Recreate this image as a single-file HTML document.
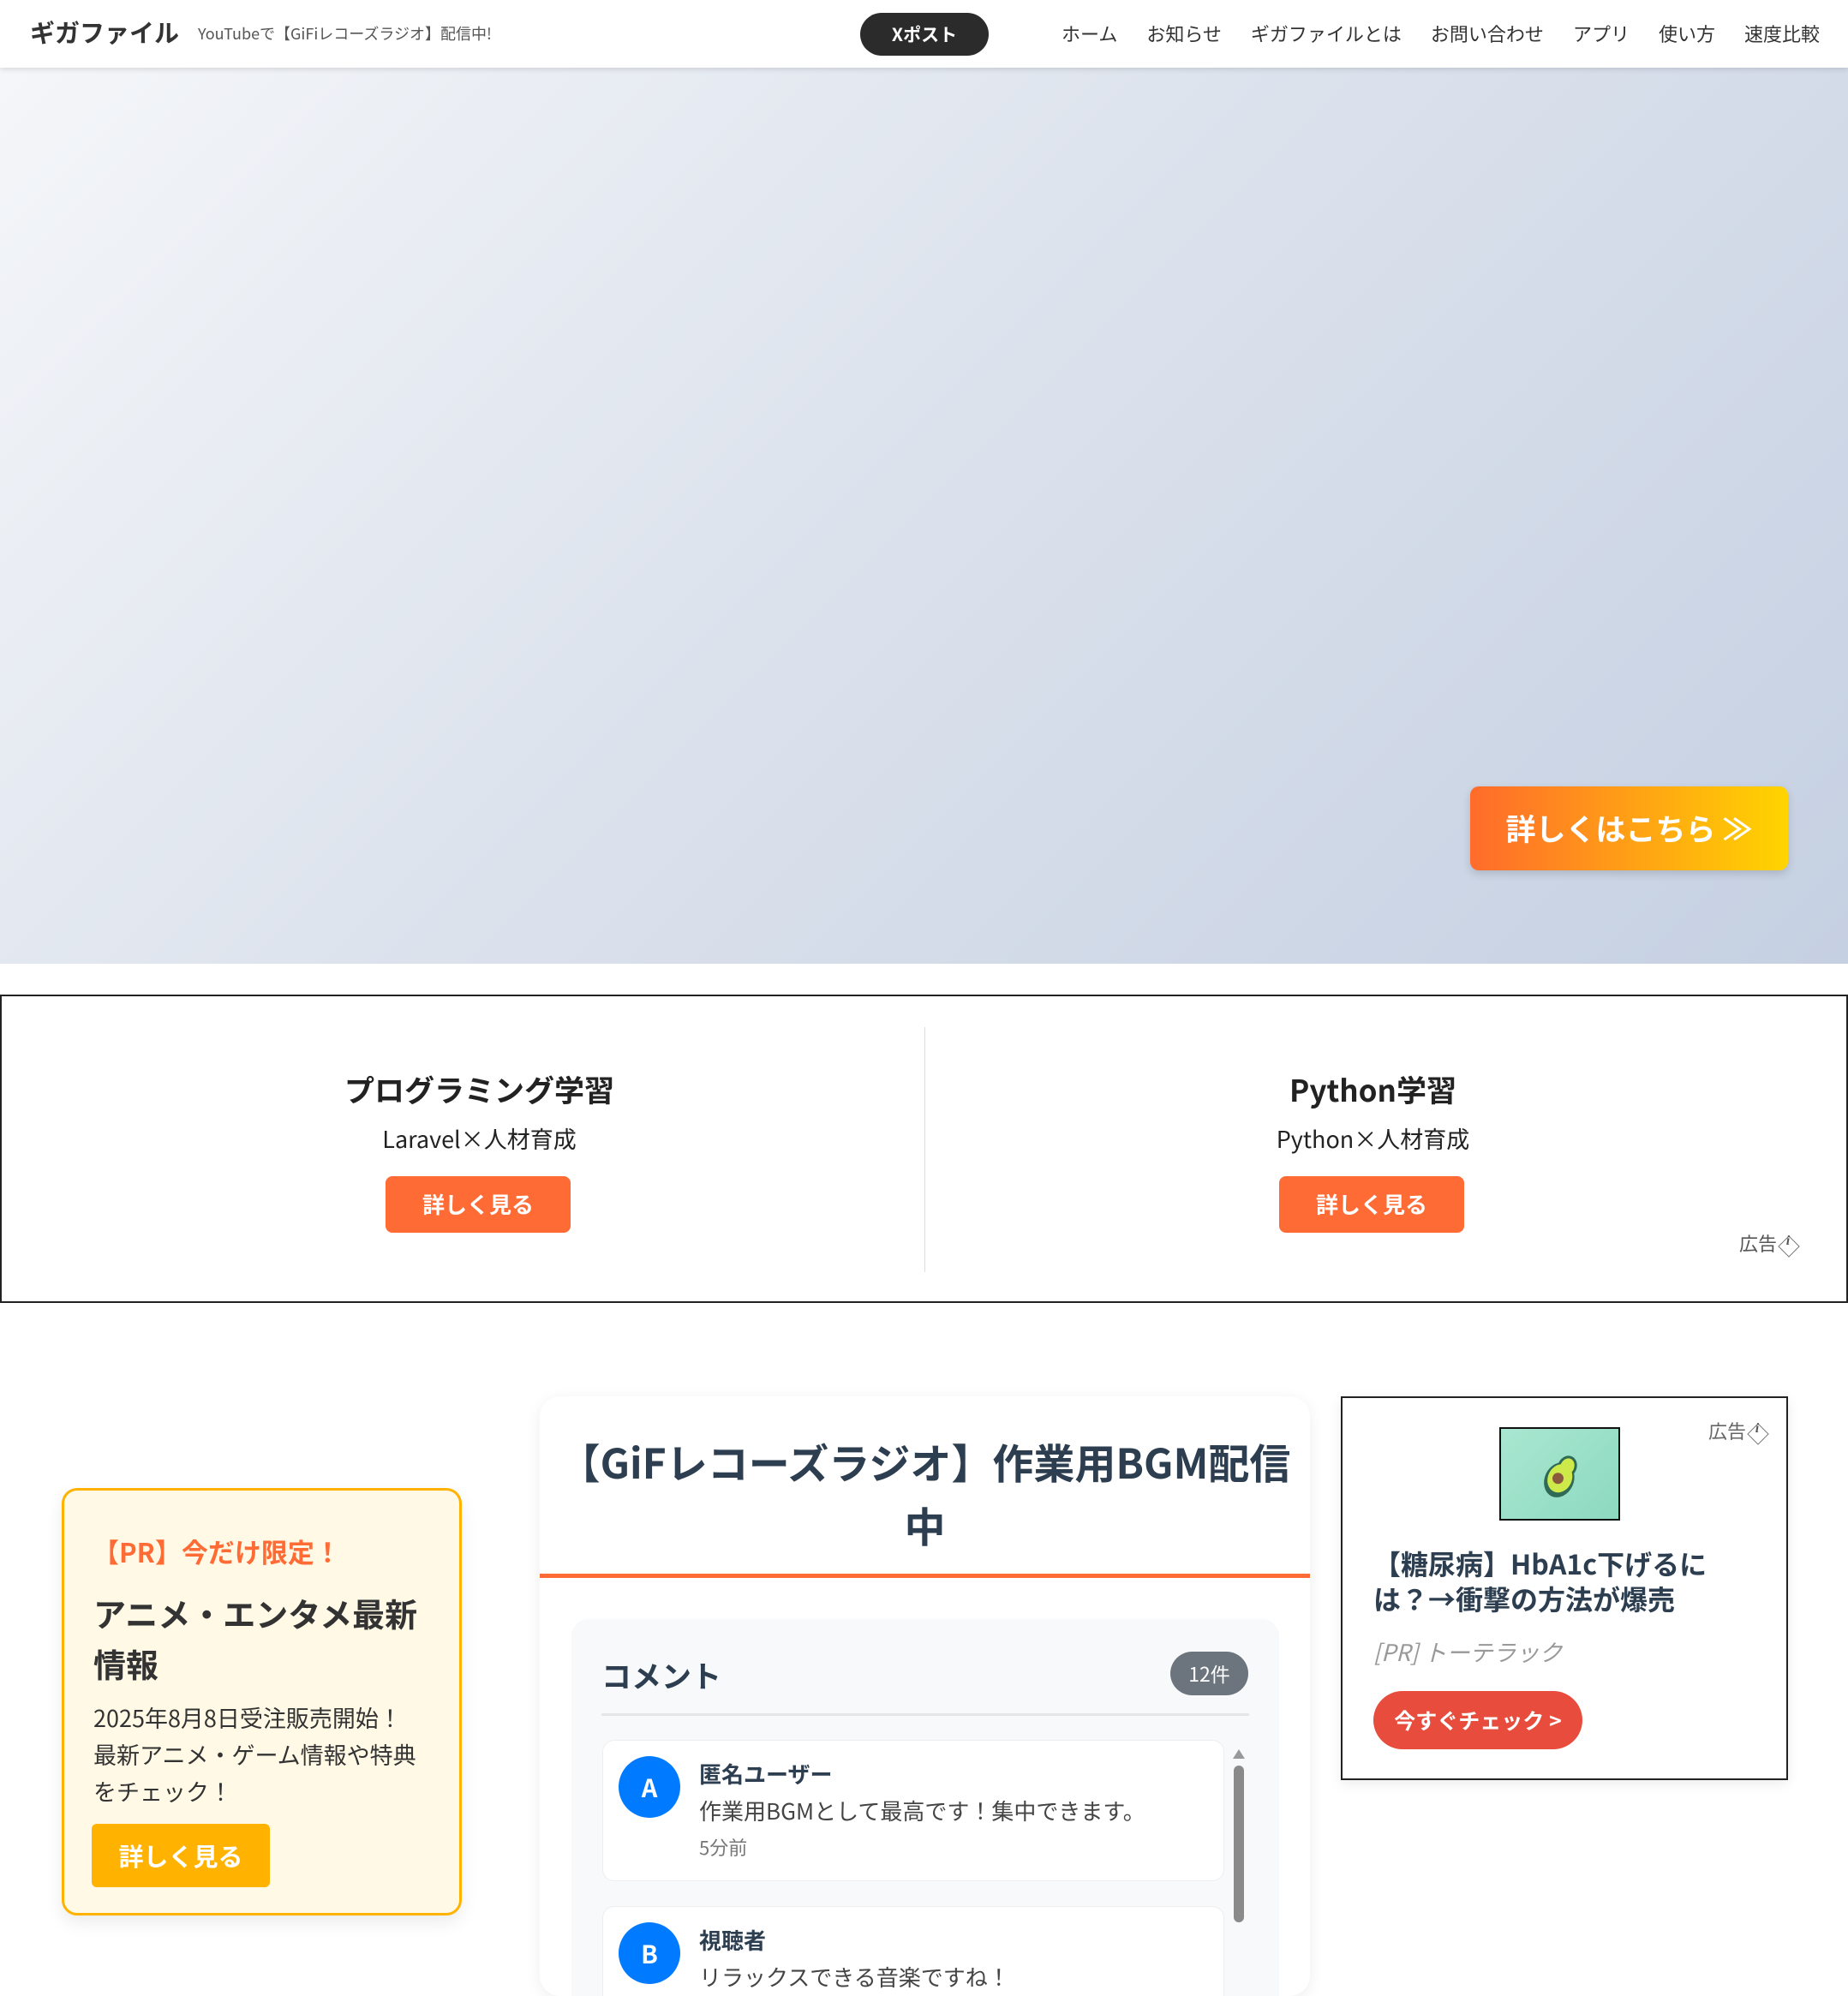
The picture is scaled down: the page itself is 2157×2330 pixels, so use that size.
<!DOCTYPE html>
<html lang="ja"><head><meta charset="utf-8">
<style>
*{margin:0;padding:0;box-sizing:border-box}
body{width:2157px;height:2302px;overflow:hidden;background:#fff;font-family:"Noto Sans CJK JP","Liberation Sans",sans-serif;color:#333;position:relative}
.a{position:absolute;white-space:nowrap}
.c{text-align:center}
.info{display:inline-block;width:22px;height:22px;position:relative;vertical-align:middle;margin-left:2px}
.info:before{content:"";position:absolute;left:3px;top:3px;width:16px;height:16px;border:1.5px solid #777;transform:rotate(45deg)}
.info i{position:absolute;left:0;top:-3px;width:22px;text-align:center;font-family:"Liberation Serif",serif;font-size:16px;font-weight:700;color:#555}
</style></head><body>
<div class="a" style="left:0;top:0;width:2157px;height:79px;background:#fff;box-shadow:0 2px 6px rgba(0,0,0,.12);z-index:2">
 <div class="a" style="left:35px;top:16px;font-size:29px;font-weight:700;color:#333">ギガファイル</div>
 <div class="a" style="left:231px;top:26px;font-size:18px;color:#555">YouTubeで【GiFiレコーズラジオ】配信中!</div>
 <div class="a c" style="left:1004px;top:15px;width:150px;height:50px;border-radius:25px;background:#2b2b2b;color:#fff;font-size:21px;font-weight:700;line-height:50px">Xポスト</div>
 <div class="a" style="left:1239px;top:23px;font-size:22px;color:#333">
  <span style="margin-right:34px">ホーム</span><span style="margin-right:34px">お知らせ</span><span style="margin-right:34px">ギガファイルとは</span><span style="margin-right:34px">お問い合わせ</span><span style="margin-right:34px">アプリ</span><span style="margin-right:34px">使い方</span><span>速度比較</span></div>
</div>
<div class="a" style="left:0;top:79px;width:2157px;height:1046px;background:linear-gradient(135deg,#f4f6f9 0%,#dde3ed 45%,#c5d0e2 100%)"></div>
<div class="a c" style="left:1716px;top:918px;width:371px;height:98px;border-radius:10px;background:linear-gradient(90deg,#ff6b2b,#ffd400);color:#fff;font-size:35px;font-weight:700;line-height:98px;box-shadow:0 4px 10px rgba(0,0,0,.15)">詳しくはこちら ≫</div>

<div class="a" style="left:0;top:1161px;width:2157px;height:360px;border:2px solid #222;background:#fff">
 <div class="a" style="left:1077px;top:36px;width:1px;height:286px;background:#ddd"></div>
 <div class="a c" style="left:0;top:83px;width:1115px;font-size:35px;font-weight:700;color:#222">プログラミング学習</div>
 <div class="a c" style="left:0;top:146px;width:1115px;font-size:27px;color:#222">Laravel×人材育成</div>
 <div class="a c" style="left:448px;top:210px;width:216px;height:66px;border-radius:8px;background:#ff6b35;color:#fff;font-size:26px;font-weight:700;line-height:66px">詳しく見る</div>
 <div class="a c" style="left:1043px;top:83px;width:1115px;font-size:35px;font-weight:700;color:#222">Python学習</div>
 <div class="a c" style="left:1043px;top:146px;width:1115px;font-size:27px;color:#222">Python×人材育成</div>
 <div class="a c" style="left:1491px;top:210px;width:216px;height:66px;border-radius:8px;background:#ff6b35;color:#fff;font-size:26px;font-weight:700;line-height:66px">詳しく見る</div>
 <div class="a" style="left:2028px;top:272px;font-size:22px;color:#555">広告<span class="info"><i>i</i></span></div>
</div>

<div class="a" style="left:72px;top:1737px;width:467px;height:499px;border:3px solid #ffb300;border-radius:18px;background:#fff9e6;box-shadow:0 8px 20px rgba(0,0,0,.08)">
 <div class="a" style="left:33px;top:48px;font-size:31px;font-weight:700;color:#ff6b35">【PR】今だけ限定！</div>
 <div class="a" style="left:34px;top:113px;font-size:38px;font-weight:700;color:#333;line-height:59px">アニメ・エンタメ最新<br>情報</div>
 <div class="a" style="left:34px;top:243px;font-size:27px;color:#333;line-height:43px">2025年8月8日受注販売開始！<br>最新アニメ・ゲーム情報や特典<br>をチェック！</div>
 <div class="a c" style="left:32px;top:389px;width:208px;height:74px;border-radius:6px;background:#ffb300;color:#fff;font-size:29px;font-weight:700;line-height:74px">詳しく見る</div>
</div>

<div class="a" style="left:630px;top:1630px;width:899px;height:700px;border-radius:24px;background:#fff;box-shadow:0 4px 18px rgba(0,0,0,.07);overflow:hidden">
 <div class="a c" style="left:0;top:38px;width:899px;font-size:48px;font-weight:700;color:#2c3e50;line-height:74px">【GiFレコーズラジオ】作業用BGM配信<br>中</div>
 <div class="a" style="left:0;top:207px;width:899px;height:5px;background:#ff6b35"></div>
 <div class="a" style="left:37px;top:260px;width:826px;height:500px;border-radius:20px;background:#f8f9fa">
  <div class="a" style="left:35px;top:40px;font-size:35px;font-weight:700;color:#2c3e50">コメント</div>
  <div class="a c" style="left:699px;top:38px;width:91px;height:51px;border-radius:26px;background:#6c757d;color:#fff;font-size:23px;line-height:51px">12件</div>
  <div class="a" style="left:35px;top:110px;width:756px;height:3px;background:#e4e6e8"></div>
  <div class="a" style="left:36px;top:141px;width:726px;height:165px;border:1px solid #eceef0;border-radius:14px;background:#fff">
   <div class="a c" style="left:18px;top:18px;width:72px;height:72px;border-radius:50%;background:#007bff;color:#fff;font-size:29px;font-weight:700;line-height:72px">A</div>
   <div class="a" style="left:112px;top:20px;font-size:26px;font-weight:700;color:#2c3e50">匿名ユーザー</div>
   <div class="a" style="left:112px;top:63px;font-size:26px;color:#444">作業用BGMとして最高です！集中できます。</div>
   <div class="a" style="left:112px;top:108px;font-size:22px;color:#777">5分前</div>
  </div>
  <div class="a" style="left:36px;top:335px;width:726px;height:165px;border:1px solid #eceef0;border-radius:14px;background:#fff">
   <div class="a c" style="left:18px;top:18px;width:72px;height:72px;border-radius:50%;background:#007bff;color:#fff;font-size:29px;font-weight:700;line-height:72px">B</div>
   <div class="a" style="left:112px;top:20px;font-size:26px;font-weight:700;color:#2c3e50">視聴者</div>
   <div class="a" style="left:112px;top:63px;font-size:26px;color:#444">リラックスできる音楽ですね！</div>
  </div>
  <div class="a" style="left:772px;top:152px;width:0;height:0;border-left:7px solid transparent;border-right:7px solid transparent;border-bottom:11px solid #999"></div>
  <div class="a" style="left:773px;top:171px;width:12px;height:183px;border-radius:6px;background:#8a8a8a"></div>
 </div>
</div>

<div class="a" style="left:1565px;top:1630px;width:522px;height:448px;border:2px solid #222;background:#fff;box-shadow:0 4px 14px rgba(0,0,0,.08)">
 <div class="a" style="left:427px;top:22px;font-size:22px;color:#666">広告<span class="info"><i>i</i></span></div>
 <div class="a" style="left:183px;top:34px;width:141px;height:109px;border:2px solid #111;background:linear-gradient(135deg,#a9e7d1,#8dd9c0)">
  <svg width="137" height="105" viewBox="0 0 137 105"><g transform="rotate(25 70 55)"><ellipse cx="70" cy="60" rx="17" ry="21" fill="#2e6a55"/><ellipse cx="72" cy="42" rx="11" ry="13" fill="#2e6a55"/><ellipse cx="70" cy="58" rx="14" ry="17" fill="#cde94a"/><ellipse cx="72" cy="42" rx="8" ry="10" fill="#cde94a"/><circle cx="68" cy="59" r="6.5" fill="#8b5a3c"/></g></svg>
 </div>
 <div class="a" style="left:36px;top:173px;font-size:32px;font-weight:700;color:#2c3e50;line-height:41px">【糖尿病】HbA1c下げるに<br>は？→衝撃の方法が爆売</div>
 <div class="a" style="left:36px;top:276px;font-size:27px;font-style:italic;color:#999">[PR] トーテラック</div>
 <div class="a c" style="left:36px;top:342px;width:244px;height:68px;border-radius:34px;background:#e74c3c;color:#fff;font-size:25px;font-weight:700;line-height:68px">今すぐチェック &gt;</div>
</div>
</body></html>
